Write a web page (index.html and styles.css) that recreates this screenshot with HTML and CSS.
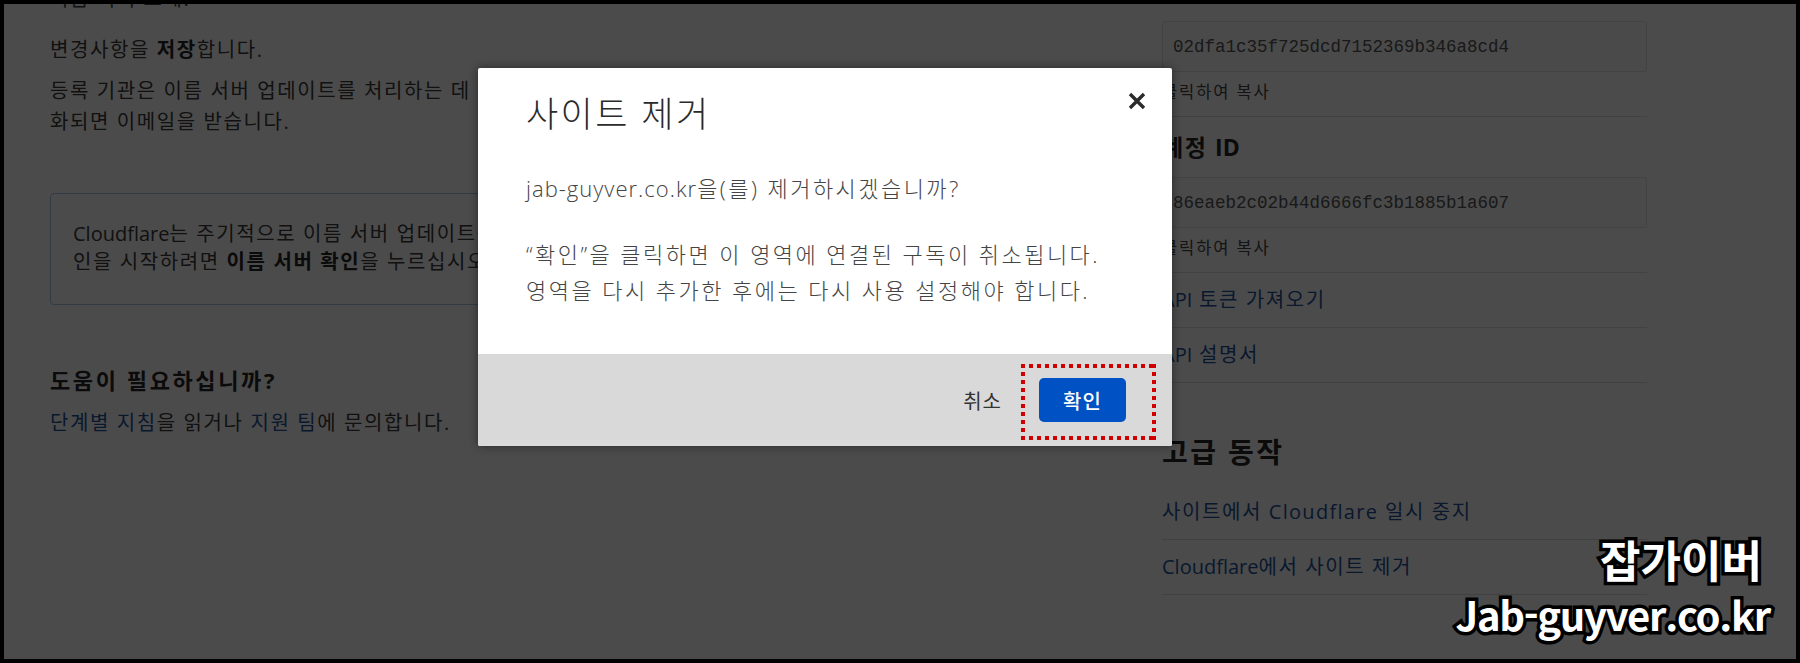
FILE: index.html
```html
<!DOCTYPE html>
<html lang="ko">
<head>
<meta charset="utf-8">
<title>사이트 제거</title>
<link rel="stylesheet" href="styles.css">
</head>
<body>
<div class="frame">
  <div class="page">
    <main class="main-col">
      <p class="txt cut">이름 서버 교체:</p>
      <p class="txt">변경사항을 <b>저장</b>합니다.</p>
      <p class="txt">등록 기관은 이름 서버 업데이트를 처리하는 데 최대 24시간이 걸릴 수 있습니다. 이름 서버가 활성<br>화되면 이메일을 받습니다.</p>
      <div class="info"><span class="lat">Cloudflare</span>는 주기적으로 이름 서버 업데이트를 확인합니다. 즉시 확<br>인을 시작하려면 <b>이름 서버 확인</b>을 누르십시오.</div>
      <h3 class="help">도움이 필요하십니까?</h3>
      <p class="txt help-line"><a class="lnk">단계별 지침</a>을 읽거나 <a class="lnk">지원 팀</a>에 문의합니다.</p>
    </main>
    <aside class="side">
      <div class="field">02dfa1c35f725dcd7152369b346a8cd4</div>
      <div class="copy">클릭하여 복사</div>
      <h3 class="side-h">계정 <span class="lat">ID</span></h3>
      <div class="field">86eaeb2c02b44d6666fc3b1885b1a607</div>
      <div class="copy">클릭하여 복사</div>
      <a class="row"><span class="lat">API</span> 토큰 가져오기</a>
      <a class="row"><span class="lat">API</span> 설명서</a>
      <h2 class="adv">고급 동작</h2>
      <a class="row">사이트에서 <span class="lat wide">Cloudflare</span> 일시 중지</a>
      <a class="row"><span class="lat">Cloudflare</span>에서 사이트 제거</a>
    </aside>
  </div>
  <div class="overlay"></div>
  <div class="dialog">
    <div class="dlg-head">
      <h2 class="dlg-title">사이트 제거</h2>
      <button class="close" aria-label="닫기">
        <svg width="18" height="18" viewBox="0 0 18 18"><path d="M2 2 L16 16 M16 2 L2 16" stroke="#2b2b2b" stroke-width="3.4" stroke-linecap="butt"/></svg>
      </button>
    </div>
    <div class="dlg-body">
      <p class="q"><span class="lat">jab-guyver.co.kr</span>을(를) 제거하시겠습니까?</p>
      <p class="q">“확인”을 클릭하면 이 영역에 연결된 구독이 취소됩니다.<br>영역을 다시 추가한 후에는 다시 사용 설정해야 합니다.</p>
    </div>
    <div class="dlg-foot">
      <span class="cancel">취소</span>
      <span class="mark"><button class="ok">확인</button></span>
    </div>
  </div>
  <div class="watermark">
    <div class="wm-ko">잡가이버</div>
    <div class="wm-en">Jab-guyver.co.kr</div>
  </div>
</div>
</body>
</html>
```

FILE: styles.css
```css
* { box-sizing: border-box; }
html, body { margin: 0; padding: 0; }
body {
  width: 1800px;
  height: 663px;
  background: #000;
  font-family: "Open Sans", "Noto Sans CJK KR", sans-serif;
  overflow: hidden;
}
.frame {
  position: relative;
  width: 1800px;
  height: 663px;
  border: 4px solid #000;
  background: #fff;
  overflow: hidden;
}
.lat { letter-spacing: 0; }
.lat.wide { letter-spacing: 1.3px; }
.page {
  display: flex;
  align-items: flex-start;
  gap: 62px;
  padding-left: 46px;
  color: #3a3a3a;
  letter-spacing: 1.6px;
}
.main-col {
  width: 1050px;
  margin-top: -21px;
}
.txt {
  margin: 0 0 10px;
  font-size: 20px;
  line-height: 31px;
}
.txt b { font-weight: 700; color: #262626; }
.cut { margin-bottom: 20px; }
.info {
  margin-top: 56px;
  border: 1px solid #a9c4ee;
  border-radius: 4px;
  padding: 26px 22px 28px;
  font-size: 20px;
  line-height: 28px;
}
.info b { font-weight: 700; color: #262626; }
.help {
  margin: 60px 0 12px;
  font-size: 22px;
  line-height: 30px;
  font-weight: 700;
  letter-spacing: 2.6px;
  color: #262626;
}
.lnk { color: #24549c; text-decoration: none; }
.side {
  width: 485px;
  margin-top: 17px;
  display: flex;
  flex-direction: column;
}
.field {
  height: 51px;
  border: 1px solid #e2e2e2;
  border-radius: 3px;
  background: #fbfbfb;
  padding: 0 10px;
  display: flex;
  align-items: center;
  font-family: "Liberation Mono", monospace;
  font-size: 17.5px;
  letter-spacing: 0;
  color: #555;
}
.copy {
  padding: 8px 0 12px;
  border-bottom: 1px solid #dedede;
  font-size: 16.5px;
  line-height: 24px;
  letter-spacing: 1.9px;
  color: #444;
}
.side-h {
  margin: 15px 0;
  font-size: 23px;
  line-height: 30px;
  font-weight: 700;
  color: #262626;
}
.row {
  display: block;
  padding: 14px 0;
  border-bottom: 1px solid #dedede;
  font-size: 20px;
  line-height: 26px;
  color: #24549c;
  text-decoration: none;
}
.adv {
  margin: 49px 0 13px;
  font-size: 28px;
  line-height: 40px;
  font-weight: 700;
  color: #262626;
  letter-spacing: 2.4px;
}
.overlay {
  position: absolute;
  inset: 0;
  background: rgba(0, 0, 0, 0.705);
}
.dialog {
  position: absolute;
  left: 474px;
  top: 64px;
  width: 694px;
  background: #fff;
  border-radius: 2px;
  box-shadow: 0 0 10px rgba(0, 0, 0, 0.45);
  overflow: hidden;
}
.dlg-head {
  position: relative;
  padding: 22px 48px 0;
}
.dlg-title {
  margin: 0;
  font-size: 35px;
  line-height: 48px;
  font-weight: 300;
  letter-spacing: 2.4px;
  color: #2b2b2b;
}
.close {
  position: absolute;
  top: 24px;
  right: 26px;
  width: 18px;
  height: 18px;
  padding: 0;
  border: 0;
  background: none;
  display: flex;
}
.dlg-body {
  padding: 32px 48px 46px;
  font-size: 22px;
  line-height: 36px;
  font-weight: 300;
  letter-spacing: 2.45px;
  color: #444;
}
.dlg-body .lat { letter-spacing: 1px; }
.q { margin: 0 0 30px; }
.q:last-child { margin-bottom: 0; }
.dlg-foot {
  height: 92px;
  background: #d9d9d9;
  display: flex;
  justify-content: flex-end;
  align-items: center;
  gap: 37px;
  padding-right: 46px;
}
.cancel {
  font-size: 20px;
  letter-spacing: 1px;
  color: #333;
}
.mark {
  position: relative;
  display: flex;
}
.mark::after {
  content: "";
  position: absolute;
  top: -14px;
  bottom: -18px;
  left: -18px;
  right: -30px;
  background:
    repeating-linear-gradient(90deg, #d10000 0 4px, transparent 4px 8px) top left / 100% 4px no-repeat,
    repeating-linear-gradient(90deg, #d10000 0 4px, transparent 4px 8px) bottom left / 100% 4px no-repeat,
    repeating-linear-gradient(180deg, #d10000 0 4px, transparent 4px 8px) top left / 4px 100% no-repeat,
    repeating-linear-gradient(180deg, #d10000 0 4px, transparent 4px 8px) top right / 4px 100% no-repeat;
}
.ok {
  width: 87px;
  height: 44px;
  border: 0;
  border-radius: 5px;
  background: #0051c3;
  color: #fff;
  font-family: "Noto Sans CJK KR", sans-serif;
  font-size: 20px;
  font-weight: 500;
  letter-spacing: 1px;
}
.watermark {
  position: absolute;
  right: 26px;
  bottom: 18px;
  display: flex;
  flex-direction: column;
  align-items: flex-end;
  font-family: "Noto Sans CJK KR", sans-serif;
  font-weight: 700;
  color: #fff;
  -webkit-text-stroke: 7px #000;
  paint-order: stroke fill;
}
.wm-ko {
  font-size: 44px;
  line-height: 56px;
  margin-right: 8px;
}
.wm-en {
  font-size: 40px;
  line-height: 54px;
  letter-spacing: -1.3px;
}
```
